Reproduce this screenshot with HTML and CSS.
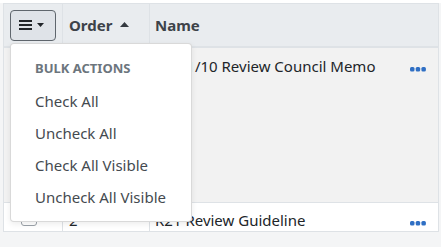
FILE: index.html
```html
<!DOCTYPE html>
<html lang="en">
<head>
  <meta charset="UTF-8">
  <title>Documents</title>
  <link rel="stylesheet" href="styles.css">
</head>
<body>
  <div class="table-wrap">
    <table class="doc-table">
      <thead>
        <tr>
          <th class="col-check">
            <button class="bulk-btn">
              <svg width="13" height="10" viewBox="0 0 13 10"><rect x="0" y="0" width="13" height="2" fill="#212529"/><rect x="0" y="4" width="13" height="2" fill="#212529"/><rect x="0" y="8" width="13" height="2" fill="#212529"/></svg>
              <svg width="7" height="4" viewBox="0 0 7 4"><polygon points="0,0 7,0 3.5,4" fill="#212529"/></svg>
            </button>
          </th>
          <th class="col-order">Order <svg class="sort" width="9" height="5" viewBox="0 0 9 5"><polygon points="0,5 9,5 4.5,0" fill="#343a40"/></svg></th>
          <th class="col-name">Name</th>
          <th class="col-act"></th>
        </tr>
      </thead>
      <tbody>
        <tr class="row-tall">
          <td class="col-check"><span class="check"></span></td>
          <td class="col-order">1</td>
          <td class="col-name">R21-1/10 Review Council Memo</td>
          <td class="col-act"><svg width="16" height="5" viewBox="0 0 16 5"><rect x="0" y="0" width="4.5" height="4.5" rx="1.5" fill="#2f6fc4"/><rect x="5.7" y="0" width="4.5" height="4.5" rx="1.5" fill="#2f6fc4"/><rect x="11.4" y="0" width="4.5" height="4.5" rx="1.5" fill="#2f6fc4"/></svg></td>
        </tr>
        <tr class="row-plain">
          <td class="col-check"><span class="check"></span></td>
          <td class="col-order">2</td>
          <td class="col-name">R21 Review Guideline</td>
          <td class="col-act"><svg width="16" height="5" viewBox="0 0 16 5"><rect x="0" y="0" width="4.5" height="4.5" rx="1.5" fill="#2f6fc4"/><rect x="5.7" y="0" width="4.5" height="4.5" rx="1.5" fill="#2f6fc4"/><rect x="11.4" y="0" width="4.5" height="4.5" rx="1.5" fill="#2f6fc4"/></svg></td>
        </tr>
      </tbody>
    </table>

    <!-- bulk actions menu (open) -->
    <div class="bulk-menu">
      <div class="menu-header">BULK ACTIONS</div>
      <div class="menu-item">Check All</div>
      <div class="menu-item">Uncheck All</div>
      <div class="menu-item">Check All Visible</div>
      <div class="menu-item">Uncheck All Visible</div>
    </div>
  </div>
</body>
</html>
```

FILE: styles.css
```css
body {
  margin: 0;
  padding: 3px 2px 0 3px;
  font-family: 'Noto Sans', 'Open Sans', sans-serif;
  font-size: 15px;
  color: #212529;
  height: 244px;
  background: linear-gradient(#ffffff 0, #ffffff 3px, #f4f5f6 3px);
}

.table-wrap {
  position: relative;
}

.doc-table {
  width: 100%;
  border-collapse: collapse;
  border: 1px solid #dee2e6;
  background: #ffffff;
}

.doc-table th {
  background: #e9ecef;
  height: 42px;
  padding: 0 6px;
  text-align: left;
  font-weight: bold;
  color: #3d4349;
  border-bottom: 2px solid #dee2e6;
}

.doc-table td {
  padding: 0 6px;
  vertical-align: top;
  border-top: 1px solid #dee2e6;
}

.col-check {
  width: 45px;
  border-right: 1px solid #dee2e6;
}

.col-order {
  width: 74px;
  border-right: 1px solid #dee2e6;
}

.doc-table .col-name {
  padding-left: 5px;
}

.doc-table .col-act {
  width: 30px;
  text-align: right;
  padding-right: 12px;
}

.sort {
  margin-left: 4px;
  vertical-align: 4px;
}

.bulk-btn {
  display: flex;
  align-items: center;
  gap: 5px;
  width: 46px;
  height: 31px;
  padding: 0 0 0 8px;
  background: #dfe3e8;
  border: 1px solid #5f666d;
  border-radius: 4px;
}

.row-tall {
  background: #f2f2f2;
}

.row-tall td {
  height: 146px;
  padding-top: 8px;
}

.row-plain td {
  height: 21px;
  padding-top: 7px;
}

.col-act svg {
  margin-top: 6px;
}

.row-plain .col-act svg {
  margin-top: 8px;
}

.check {
  display: block;
  width: 14px;
  height: 14px;
  margin: 4px 0 0 11px;
  border: 1px solid #9aa1a8;
  border-radius: 3px;
  background: #fff;
}

.row-plain .check {
  margin-top: 0;
}

.bulk-menu {
  position: absolute;
  left: 7px;
  top: 40px;
  width: 180px;
  padding: 8px 0;
  background: #ffffff;
  border: 1px solid rgba(0, 0, 0, 0.15);
  border-radius: 4px;
  box-shadow: 0 2px 6px rgba(0, 0, 0, 0.08);
}

.menu-header {
  padding: 0 24px;
  line-height: 33px;
  font-size: 13px;
  font-weight: bold;
  color: #6c757d;
}

.menu-item {
  padding: 0 24px;
  line-height: 32px;
  color: #444a50;
}
```
